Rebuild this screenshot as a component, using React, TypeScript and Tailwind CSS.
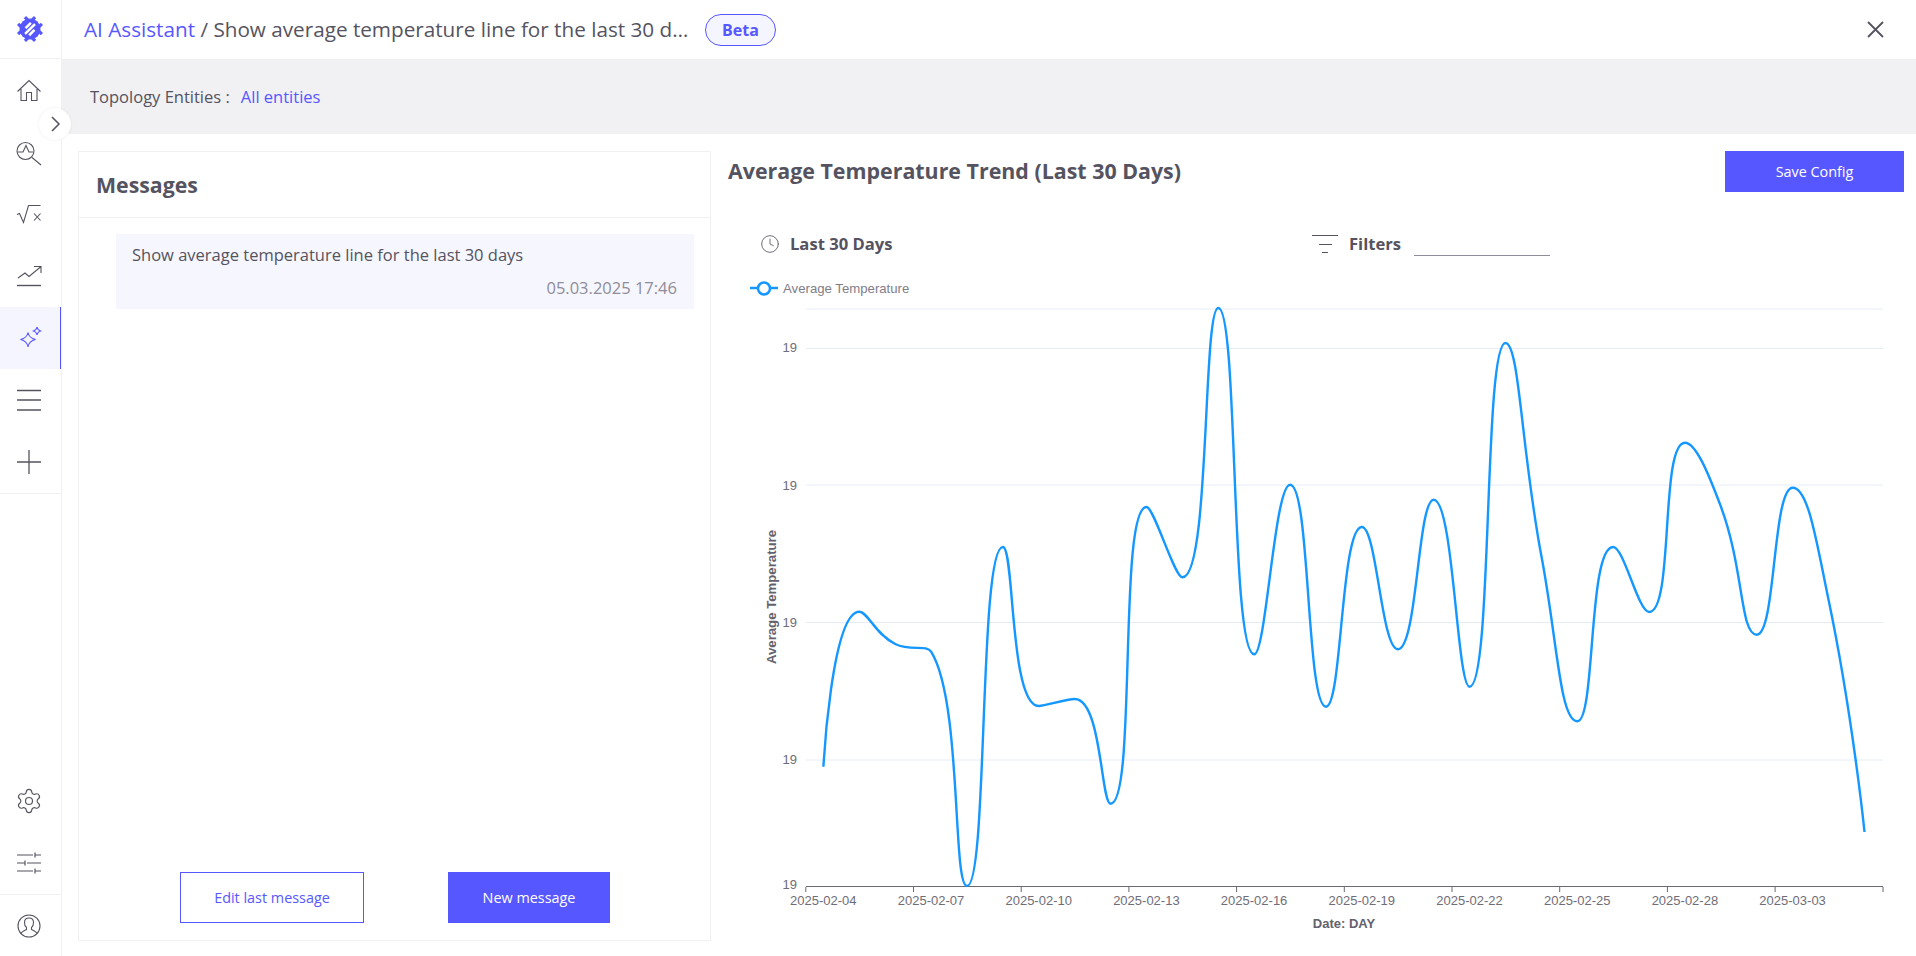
import { Clock, Settings } from 'lucide-react';

const ACCENT = '#5757ff';
const LINE = '#1497ff';

// y pixel of each day, read off the reference
const points = [
  766.7, 611.7, 644, 651.7, 886, 547, 706, 699, 803.7, 507,
  577.3, 308, 654.3, 484.7, 706.7, 527, 649.3, 499.7, 686.7, 343,
  556, 721.3, 547, 612, 442.7, 506.7, 634.7, 487.7, 600, 832,
];
const START_X = 823.4;
const STEP = 35.9;

const xTicks = [
  '2025-02-04', '2025-02-07', '2025-02-10', '2025-02-13', '2025-02-16',
  '2025-02-19', '2025-02-22', '2025-02-25', '2025-02-28', '2025-03-03',
];
const gridLines = [309, 348.5, 485, 622.5, 760];
const yLabels = [347, 485, 622, 759, 884];

const clamp = (v: number, a: number, b: number) => Math.max(Math.min(v, Math.max(a, b)), Math.min(a, b));

// smooth line, handles clamped between neighbours so peaks stay on the data
function smoothPath(ys: number[], smooth = 0.5) {
  const pts = ys.map((y, i) => [START_X + i * STEP, y]);
  let d = `M${pts[0][0]},${pts[0][1]}`;
  let cx0 = pts[0][0];
  let cy0 = pts[0][1];
  for (let i = 1; i < pts.length; i++) {
    const [x, y] = pts[i];
    const [px, py] = pts[i - 1];
    let cx1 = x;
    let cy1 = y;
    let nx0 = x;
    let ny0 = y;
    if (i < pts.length - 1) {
      const [nx, ny] = pts[i + 1];
      const lenPrev = Math.hypot(x - px, y - py);
      const lenNext = Math.hypot(nx - x, ny - y);
      const ratio = lenNext / (lenNext + lenPrev);
      nx0 = clamp(x + (nx - px) * smooth * ratio, x, nx);
      ny0 = clamp(y + (ny - py) * smooth * ratio, y, ny);
      cx1 = clamp(x - ((nx0 - x) * lenPrev) / lenNext, px, x);
      cy1 = clamp(y - ((ny0 - y) * lenPrev) / lenNext, py, y);
      nx0 = x + ((x - cx1) * lenNext) / lenPrev;
      ny0 = y + ((y - cy1) * lenNext) / lenPrev;
    }
    d += `C${cx0},${cy0} ${cx1},${cy1} ${x},${y}`;
    cx0 = nx0;
    cy0 = ny0;
  }
  return d;
}

function Icon({ children }: { children: React.ReactNode }) {
  return (
    <svg width="28" height="28" viewBox="0 0 28 28" fill="none" stroke="#55535f" strokeWidth="1.1">
      {children}
    </svg>
  );
}

function NavItem({ children, active }: { children: React.ReactNode; active?: boolean }) {
  return (
    <div
      className={
        active
          ? 'h-[62px] flex items-center pl-[15px] bg-[#f5f5ff] border-r border-[#5757ff]'
          : 'h-[62px] flex items-center pl-[15px]'
      }
    >
      {children}
    </div>
  );
}

function Sidebar() {
  return (
    <div className="w-[62px] shrink-0 h-full flex flex-col border-r border-[#f1f1f3] bg-white">
      <div className="h-[59px] shrink-0 flex items-center pl-[16px] border-b border-[#f1f1f3]">
        <svg width="28" height="28" viewBox="0 0 28 28">
          <g transform="rotate(45 14 14)">
            <circle cx="14" cy="14" r="10.5" fill={ACCENT} />
            <rect x="7.6" y="2" width="3.2" height="24" fill={ACCENT} />
            <rect x="17.2" y="2" width="3.2" height="24" fill={ACCENT} />
            <rect x="2" y="7.6" width="24" height="3.2" fill={ACCENT} />
            <rect x="2" y="17.2" width="24" height="3.2" fill={ACCENT} />
            <rect x="9" y="9" width="2.5" height="7.5" fill="#fff" />
            <rect x="12.8" y="7" width="2.5" height="14" fill="#fff" />
            <rect x="16.6" y="11.5" width="2.5" height="7.5" fill="#fff" />
          </g>
        </svg>
      </div>
      <div className="border-b border-[#f1f1f3]">
        <NavItem>
          <Icon>
            <path d="M2.5 15.5 14 4.5l11.5 11M6 13v11.5h5.5V16.5h5v8H22V13" />
          </Icon>
        </NavItem>
        <NavItem>
          <Icon>
            <circle cx="10.5" cy="13" r="8.5" />
            <path d="M17 19.5l9 7.5M3 14h5l3-6.5L14 14h4" />
          </Icon>
        </NavItem>
        <NavItem>
          <Icon>
            <path d="M2 14.5l2.5-1 4 9 5-17h12M19 13.5l6.5 7M25.5 13.5l-6.5 7" />
          </Icon>
        </NavItem>
        <NavItem>
          <Icon>
            <path d="M2 23.5h24" strokeWidth="1.4" />
            <path d="M3 16l7-5 4 3.5L25.5 5M19 4.5h7V11" />
          </Icon>
        </NavItem>
        <NavItem active>
          <Icon>
            <path
              stroke={ACCENT}
              d="M13 8.5Q14 14 20.5 15.5 14 17 13 23 12 17 5.5 15.5 12 14 13 8.5ZM22 3Q22.5 6 25.5 7 22.5 8 22 11 21.5 8 18.5 7 21.5 6 22 3Z"
            />
          </Icon>
        </NavItem>
        <NavItem>
          <Icon>
            <path d="M2 4.5h24M2 14h24M2 24h24" strokeWidth="1.4" />
          </Icon>
        </NavItem>
        <NavItem>
          <Icon>
            <path d="M2 14h24M14 2v24" strokeWidth="1.3" />
          </Icon>
        </NavItem>
      </div>
      <div className="flex-1" />
      <NavItem>
        <Settings size={28} strokeWidth={1} color="#55535f" />
      </NavItem>
      <NavItem>
        <Icon>
          <path
            strokeWidth="1.2"
            d="M2 6h16M20 3.5v5M20 6h6M2 14h8M10 11.5v5M12 14h14M2 22h16M20 19.5v5M20 22h6"
          />
        </Icon>
      </NavItem>
      <div className="h-[62px] shrink-0 flex items-center pl-[15px] border-t border-[#f1f1f3]">
        <Icon>
          <circle cx="14" cy="14" r="11" />
          <path d="M6 22c.5-3 4-3.5 5.5-4.5v-2c-1.5-1-2-3-2-5 0-3 2-4.5 4.5-4.5s4.5 1.5 4.5 4.5c0 2-.5 4-2 5v2c1.5 1 5 1.5 5.5 4.5" />
        </Icon>
      </div>
    </div>
  );
}

function Chart() {
  return (
    <svg
      width="1176"
      height="686"
      viewBox="740 270 1176 686"
      className="block mt-[14px] ml-[29px]"
      style={{ fontFamily: '"Liberation Sans", Arial, sans-serif' }}
    >
      <path d="M750 288h28" stroke={LINE} strokeWidth="2.5" />
      <circle cx="764" cy="288.5" r="6" fill="#fff" stroke={LINE} strokeWidth="2.5" />
      <text x="783" y="293" fontSize="13.2" fill="#7f7d88">Average Temperature</text>

      {gridLines.map((y) => (
        <line key={y} x1="806" x2="1883" y1={y} y2={y} stroke="#e6ecf6" />
      ))}
      {yLabels.map((y) => (
        <text key={y} x="797" y={y + 4.5} fontSize="13" fill="#6f6d78" textAnchor="end">19</text>
      ))}

      <line x1="806" x2="1883" y1="886.5" y2="886.5" stroke="#6b6975" />
      {xTicks.map((label, i) => {
        const x = 805.8 + i * 107.7;
        return (
          <g key={label}>
            <line x1={x} x2={x} y1="887" y2="892" stroke="#6b6975" />
            <text x={x + 17.5} y="905" fontSize="13" fill="#6f6d78" textAnchor="middle">{label}</text>
          </g>
        );
      })}
      <line x1="1883" x2="1883" y1="887" y2="892" stroke="#6b6975" />

      <text x="1344" y="928" fontSize="13" fontWeight="700" fill="#63616d" textAnchor="middle">Date: DAY</text>
      <text
        x="0"
        y="0"
        fontSize="13.2"
        fontWeight="700"
        fill="#63616d"
        textAnchor="middle"
        transform="translate(776 597) rotate(-90)"
      >
        Average Temperature
      </text>

      <path d={smoothPath(points)} fill="none" stroke={LINE} strokeWidth="2.4" />
    </svg>
  );
}

export default function App() {
  return (
    <div
      className="relative w-full h-[956px] flex overflow-hidden bg-white text-[#55535f]"
      style={{ fontFamily: '"Open Sans", sans-serif' }}
    >
      <Sidebar />

      {/* collapse toggle */}
      <div className="absolute left-[39px] top-[108px] w-[32px] h-[32px] rounded-full bg-white flex items-center justify-center shadow-[0_0_3px_rgba(0,0,0,0.08)]">
        <svg width="12" height="16" viewBox="0 0 12 16" fill="none" stroke="#55535f" strokeWidth="1.5">
          <path d="M3 1l7 7-7 7" />
        </svg>
      </div>

      <div className="flex-1 min-w-0 flex flex-col">
        {/* header */}
        <div className="h-[59px] shrink-0 flex items-center pl-[22px] pr-[32px]">
          <div className="w-[612px] truncate text-[20.7px]">
            <span className="text-[#5757ff]">AI Assistant</span> / Show average temperature line for the last 30 days
          </div>
          <div className="ml-[9px] w-[71px] h-[32px] rounded-full border border-[#5757ff] bg-[#f5f5ff] flex items-center justify-center text-[16px] font-bold text-[#5757ff]">
            Beta
          </div>
          <svg className="ml-auto" width="17" height="17" viewBox="0 0 17 17" fill="none" stroke="#55535f" strokeWidth="1.8">
            <path d="M1 1l15 15M16 1L1 16" />
          </svg>
        </div>

        {/* filter band */}
        <div className="h-[75px] shrink-0 bg-[#f1f1f3] flex items-center pl-[28px] pt-[2px] text-[16.5px]">
          <span>Topology Entities :</span>
          <span className="ml-[11px] text-[#5757ff]">All entities</span>
        </div>

        {/* main */}
        <div className="flex-1 min-h-0 flex pt-[17px]">
          <div className="ml-[16px] w-[633px] h-[790px] shrink-0 flex flex-col border border-[#f1f1f3]">
            <div className="h-[66px] shrink-0 flex items-center pl-[17px] border-b border-[#f1f1f3] text-[21.3px] font-bold">
              Messages
            </div>
            <div className="flex-1 pt-[16px] pl-[37px] pr-[16px]">
              <div className="h-[75px] bg-[#f6f6fe] pl-[16px] pr-[17px] pt-[10px] text-[16.5px] leading-[22px]">
                <div>Show average temperature line for the last 30 days</div>
                <div className="mt-[11px] text-right text-[#8f8d99]">05.03.2025 17:46</div>
              </div>
            </div>
            <div className="h-[68px] shrink-0 flex pl-[101px] gap-[84px] text-[14.4px]">
              <button className="w-[184px] h-[51px] border border-[#5757ff] text-[#5757ff]">Edit last message</button>
              <button className="w-[162px] h-[51px] bg-[#5757ff] text-white">New message</button>
            </div>
          </div>

          <div className="flex-1 min-w-0">
            <div className="h-[41px] ml-[17px] mr-[12px] flex items-center justify-between">
              <div className="text-[21.4px] font-bold">Average Temperature Trend (Last 30 Days)</div>
              <button className="w-[179px] h-[41px] bg-[#5757ff] text-white text-[14.4px]">Save Config</button>
            </div>
            <div className="mt-[40px] h-[24px] ml-[49px] flex items-center text-[16.6px] font-bold">
              <div className="w-[552px] flex items-center">
                <Clock size={20} strokeWidth={1} color="#55535f" />
                <span className="ml-[10px]">Last 30 Days</span>
              </div>
              <svg width="26" height="20" viewBox="0 0 26 20" fill="none" stroke="#55535f" strokeWidth="1.2">
                <path d="M0 1.5h26M7 10.5h13M10 18.5h6" />
              </svg>
              <span className="ml-[11px]">Filters</span>
              <div className="ml-[13px] w-[136px] h-[23px] border-b border-[#8f8d99]" />
            </div>
            <Chart />
          </div>
        </div>
      </div>
    </div>
  );
}
